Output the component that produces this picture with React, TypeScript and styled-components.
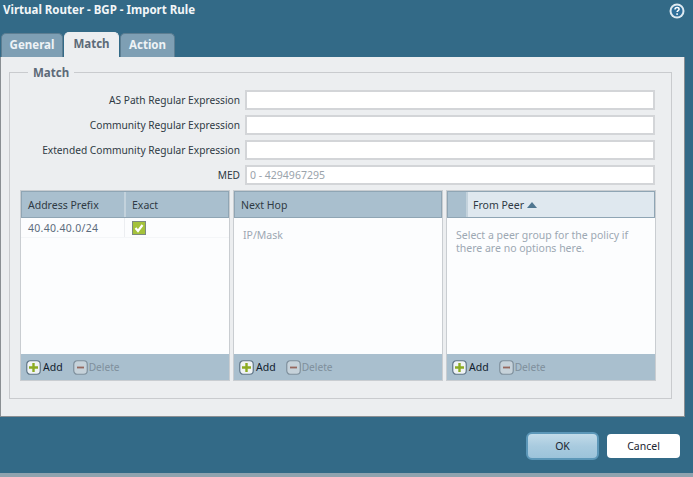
import React from "react";
import styled, { createGlobalStyle } from "styled-components";

const Global = createGlobalStyle`
  html, body { margin: 0; padding: 0; background: #336a87; }
  body { font-family: "Noto Sans", "DejaVu Sans", sans-serif; font-size: 11px; }
  * { box-sizing: border-box; }
`;

const Page = styled.div`
  width: 693px;
  height: 477px;
  overflow: hidden;
  background: #336a87;
  display: flex;
  flex-direction: column;
`;
const TitleBar = styled.div`
  height: 32px;
  padding: 2px 8px 0 3px;
  display: flex;
  justify-content: space-between;
  align-items: flex-start;
`;
const Title = styled.div`
  color: #f2f6f8;
  font-weight: 700;
  font-size: 11.5px;
  line-height: 15px;
`;
const TabBar = styled.div`
  height: 25px;
  display: flex;
  gap: 1px;
  padding-left: 1px;
  align-items: flex-end;
`;
const Tab = styled.div<{ $active?: boolean; $w: number }>`
  height: ${(p) => (p.$active ? 25 : 24)}px;
  width: ${(p) => p.$w}px;
  border-radius: 5px 5px 0 0;
  border: 1px solid ${(p) => (p.$active ? "#eceef0" : "#5d7e92")};
  border-bottom: none;
  background: ${(p) => (p.$active ? "#eceef0" : "#7e9fb4")};
  color: ${(p) => (p.$active ? "#5c6a78" : "#eef3f6")};
  font-weight: 700;
  font-size: 11.5px;
  line-height: 22px;
  text-align: center;
`;
const Panel = styled.div`
  width: 685px;
  height: 360px;
  background: #eceef0;
  border-right: 1px solid #8a8f93;
  border-bottom: 1px solid #8a8f93;
  border-left: 1px solid #8a8f93;
  padding: 8px 12px 0 8px;
`;
const Fieldset = styled.fieldset`
  margin: 0;
  height: 334px;
  border: 1px solid #c9cbce;
  padding: 10px 15px 0 10px;
  min-width: 0;
`;
const Legend = styled.legend`
  margin-left: 8px;
  padding: 1px 5px 0;
  color: #5c6a78;
  font-weight: 700;
  font-size: 11.5px;
  line-height: 14px;
`;
const FieldRow = styled.div`
  display: flex;
  justify-content: flex-end;
  align-items: center;
  gap: 5px;
  height: 20px;
  margin-bottom: 5px;
  padding-right: 1px;
`;
const FieldLabel = styled.label`
  color: #2f3a44;
  font-size: 10.2px;
`;
const Input = styled.div`
  width: 410px;
  flex: none;
  height: 20px;
  background: #fff;
  border: 2px solid #d3d5d8;
  color: #9aa3ab;
  font-size: 10.5px;
  line-height: 16px;
  padding-left: 3px;
`;
const Grids = styled.div`
  display: flex;
  gap: 3px;
`;
const Grid = styled.div`
  width: 210px;
  height: 191px;
  background: #fcfdfe;
  border: 1px solid #c9cdd1;
  display: flex;
  flex-direction: column;
`;
const GridHeader = styled.div`
  height: 27px;
  display: flex;
  flex-shrink: 0;
  background: #a9bfce;
  border: 1px solid #8fa5b4;
`;
const HeaderCell = styled.div<{ $w?: number; $sorted?: boolean }>`
  width: ${(p) => (p.$w ? `${p.$w}px` : "auto")};
  flex: ${(p) => (p.$w ? "none" : 1)};
  padding: 1px 0 0 ${(p) => (p.$sorted ? 5 : 6)}px;
  line-height: 24px;
  font-size: 10.5px;
  color: #2f3a44;
  border-right: 2px solid #c3d2dc;
  background: ${(p) => (p.$sorted ? "#dfe8ef" : "transparent")};
  display: flex;
  align-items: center;
  gap: 3px;
  &:last-child { border-right: none; }
`;
const GridBody = styled.div`
  flex: 1;
  min-height: 0;
`;
const DataRow = styled.div`
  display: flex;
  height: 20px;
  border-bottom: 1px solid #f4f6f8;
`;
const DataCell = styled.div<{ $w?: number }>`
  width: ${(p) => (p.$w ? `${p.$w}px` : "auto")};
  flex: ${(p) => (p.$w ? "none" : 1)};
  padding: 1px 0 0 7px;
  color: #5b6b7c;
  font-size: 10.5px;
  letter-spacing: 0.3px;
  line-height: 18px;
  border-right: 1px solid #eceef1;
  &:last-child { border-right: none; }
`;
const CheckCell = styled(DataCell)`
  padding: 3px 0 0 7px;
`;
const Hint = styled.div`
  padding: 11px 8px 0 9px;
  color: #9ca8b3;
  font-size: 10.5px;
  line-height: 13px;
`;
const GridFooter = styled.div`
  height: 26px;
  background: #a9bfce;
  display: flex;
  align-items: center;
  padding-left: 5px;
  flex-shrink: 0;
  gap: 10px;
`;
const ToolButton = styled.span<{ $off?: boolean }>`
  display: inline-flex;
  align-items: center;
  gap: ${(p) => (p.$off ? 1 : 2)}px;
  font-size: ${(p) => (p.$off ? 10.2 : 10.5)}px;
  color: ${(p) => (p.$off ? "#7f8f9c" : "#10202c")};
`;
const Footer = styled.div`
  height: 56px;
  display: flex;
  justify-content: flex-end;
  align-items: flex-start;
  padding: 15px 13px 0 0;
  gap: 8px;
`;
const OkButton = styled.div`
  width: 73px;
  height: 28px;
  border-radius: 6px;
  border: 2px solid #5c97b8;
  background: linear-gradient(#c2dbe9, #a9cbdf 50%, #9cc3da);
  font-size: 10.5px;
  line-height: 24px;
  text-align: center;
  color: #1a2530;
`;
const CancelButton = styled.div`
  width: 73px;
  height: 24px;
  margin-top: 2px;
  border-radius: 4px;
  background: #fff;
  font-size: 10.5px;
  line-height: 24px;
  text-align: center;
  color: #1a2530;
`;
const BottomStrip = styled.div`
  height: 4px;
  background: #8fa3af;
`;

const Help = () => (
  <svg width="16" height="16" viewBox="0 0 16 16" style={{ marginTop: 1 }}>
    <circle cx="8" cy="8" r="7.5" fill="#dfeaf1" />
    <circle cx="8" cy="8" r="5.5" fill="#2f6f9a" />
    <path d="M6 6.4c0-1.3 1-1.9 2.1-1.9s2 .7 2 1.7c0 1.4-2 1.4-2 2.8" fill="none" stroke="#fff" strokeWidth="1.5" />
    <rect x="7.3" y="10.3" width="1.6" height="1.6" fill="#fff" />
  </svg>
);
const Check = () => (
  <svg width="14" height="14" viewBox="0 0 14 14" style={{ display: "block" }}>
    <rect x="0.5" y="0.5" width="13" height="13" fill="#a4c23a" stroke="#7d8a80" />
    <path d="M3.5 7l2.5 3 4.5-6" fill="none" stroke="#fff" strokeWidth="2.2" />
  </svg>
);
const PlusIcon = () => (
  <svg width="15" height="15" viewBox="0 0 15 15">
    <rect x="0.75" y="0.75" width="13.5" height="13.5" rx="3.5" fill="#f0f3f5" stroke="#5f7587" strokeWidth="1.2" />
    <path d="M7.5 3v9M3 7.5h9" stroke="#8cab22" strokeWidth="2.4" />
  </svg>
);
const MinusIcon = () => (
  <svg width="15" height="15" viewBox="0 0 15 15">
    <rect x="0.75" y="0.75" width="13.5" height="13.5" rx="3.5" fill="#c6d2da" stroke="#7f909d" strokeWidth="1.2" />
    <path d="M4 7.5h7" stroke="#96685e" strokeWidth="1.8" />
  </svg>
);
const SortUp = () => (
  <svg width="10" height="6" viewBox="0 0 10 6">
    <path d="M5 0l5 6H0z" fill="#4f7690" />
  </svg>
);

const Tools = () => (
  <GridFooter>
    <ToolButton><PlusIcon />Add</ToolButton>
    <ToolButton $off><MinusIcon />Delete</ToolButton>
  </GridFooter>
);

export default function App() {
  return (
    <Page>
      <Global />
      <TitleBar>
        <Title>Virtual Router - BGP - Import Rule</Title>
        <Help />
      </TitleBar>
      <TabBar>
        <Tab $w={62}>General</Tab>
        <Tab $active $w={55}>Match</Tab>
        <Tab $w={55}>Action</Tab>
      </TabBar>
      <Panel>
        <Fieldset>
          <Legend>Match</Legend>
          <FieldRow><FieldLabel>AS Path Regular Expression</FieldLabel><Input /></FieldRow>
          <FieldRow><FieldLabel>Community Regular Expression</FieldLabel><Input /></FieldRow>
          <FieldRow><FieldLabel>Extended Community Regular Expression</FieldLabel><Input /></FieldRow>
          <FieldRow><FieldLabel>MED</FieldLabel><Input>0 - 4294967295</Input></FieldRow>
          <Grids>
            <Grid>
              <GridHeader>
                <HeaderCell $w={104}>Address Prefix</HeaderCell>
                <HeaderCell>Exact</HeaderCell>
              </GridHeader>
              <GridBody>
                <DataRow>
                  <DataCell $w={104}>40.40.40.0/24</DataCell>
                  <CheckCell><Check /></CheckCell>
                </DataRow>
              </GridBody>
              <Tools />
            </Grid>
            <Grid>
              <GridHeader><HeaderCell>Next Hop</HeaderCell></GridHeader>
              <GridBody><Hint>IP/Mask</Hint></GridBody>
              <Tools />
            </Grid>
            <Grid>
              <GridHeader>
                <HeaderCell $w={20} />
                <HeaderCell $sorted>From Peer <SortUp /></HeaderCell>
              </GridHeader>
              <GridBody><Hint>Select a peer group for the policy if there are no options here.</Hint></GridBody>
              <Tools />
            </Grid>
          </Grids>
        </Fieldset>
      </Panel>
      <Footer>
        <OkButton>OK</OkButton>
        <CancelButton>Cancel</CancelButton>
      </Footer>
      <BottomStrip />
    </Page>
  );
}
